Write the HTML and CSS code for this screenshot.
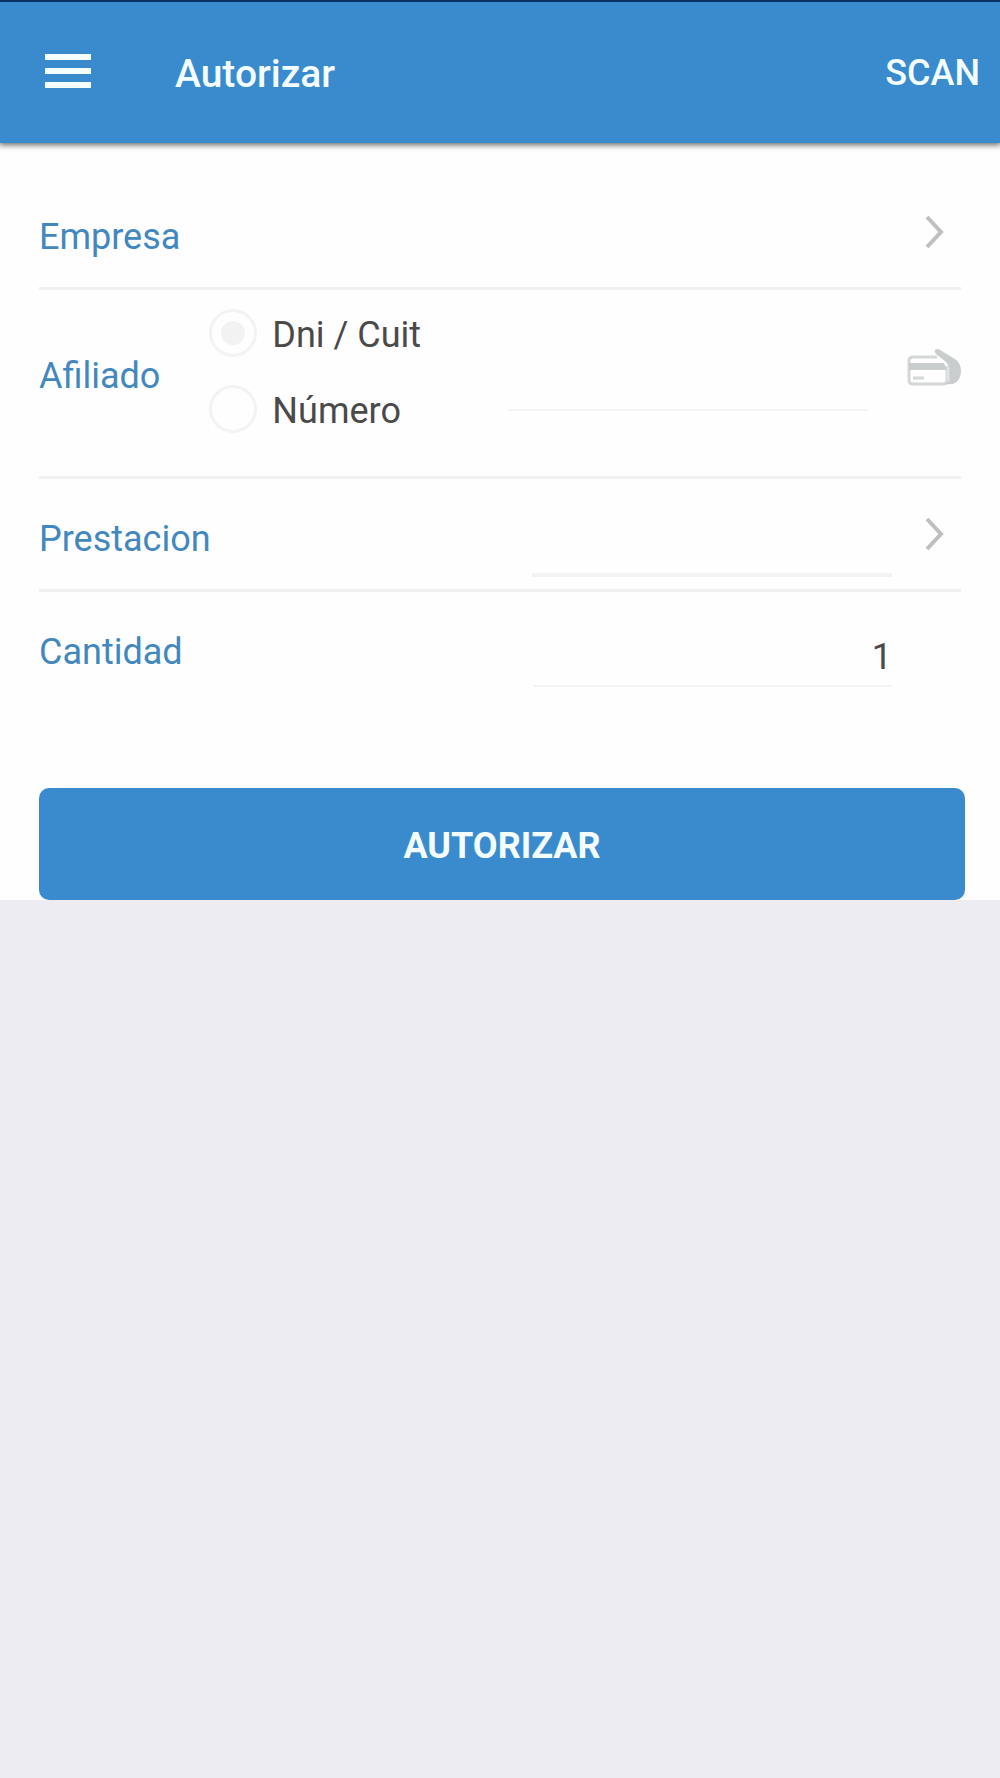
FILE: index.html
```html
<!DOCTYPE html>
<html lang="es">
<head>
    <meta charset="UTF-8">
    <meta name="viewport" content="width=device-width, initial-scale=1.0">
    <title>Autorizar</title>
    <link rel="stylesheet" href="styles.css">
</head>
<body>
    <header class="toolbar">
        <button type="button" class="menu-button" aria-label="Menu">
            <svg width="46" height="34" viewBox="0 0 46 34" fill="currentColor">
                <rect width="46" height="6"/>
                <rect y="14" width="46" height="6"/>
                <rect y="28" width="46" height="6"/>
            </svg>
        </button>
        <h1>Autorizar</h1>
        <button type="button" class="scan-button">SCAN</button>
    </header>

    <form class="form">
        <div class="row">
            <label class="name" for="empresa">Empresa</label>
            <button type="button" class="side chevron" id="empresa">
                <svg width="20" height="34" viewBox="0 0 20 34" fill="none" stroke="currentColor" stroke-width="4">
                    <path d="M2 2l14 15L2 32"/>
                </svg>
            </button>
        </div>

        <div class="row member">
            <label class="name" for="afiliado">Afiliado</label>
            <div class="radios">
                <label><input type="radio" name="tipo" value="dni" checked><span>Dni / Cuit</span></label>
                <label><input type="radio" name="tipo" value="numero"><span>Número</span></label>
            </div>
            <input class="field" type="text" id="afiliado">
            <button type="button" class="side card" aria-label="Tarjeta">
                <svg width="54" height="38" viewBox="0 0 54 38">
                    <path d="M30 9H6Q2 9 2 13v19q0 4 4 4h30q4 0 4-4V18" fill="none" stroke="#d3d7d7" stroke-width="3"/>
                    <path d="M2 15h35l3 7H2z" fill="#c9cdcd"/>
                    <path d="M6 30h11" stroke="#d3d7d7" stroke-width="3"/>
                    <path d="M28 2q2-2 5 0l15 9q6 4 6 12 0 8-6 12-3 2-10 1l4-3V20q0-3-3-6L29 6q-2-2-1-4z" fill="#c9cdcd"/>
                    <path d="M41 19v14" stroke="#e0e3e3" stroke-width="3"/>
                </svg>
            </button>
        </div>

        <div class="row">
            <label class="name" for="prestacion">Prestacion</label>
            <input class="field thick" type="text" id="prestacion">
            <button type="button" class="side chevron" aria-label="Buscar">
                <svg width="20" height="34" viewBox="0 0 20 34" fill="none" stroke="currentColor" stroke-width="4">
                    <path d="M2 2l14 15L2 32"/>
                </svg>
            </button>
        </div>

        <div class="row amount">
            <label class="name" for="cantidad">Cantidad</label>
            <input class="field" type="text" inputmode="numeric" id="cantidad" value="1">
        </div>

        <button type="submit" class="submit">AUTORIZAR</button>
    </form>
</body>
</html>
```
FILE: styles.css
```css
* {
    box-sizing: border-box;
}

body {
    margin: 0;
    background-color: #edecf2;
    color: #4a4a4a;
    font-family: Roboto, sans-serif;
    font-size: 36px;
    line-height: 44px;
}

button, input {
    margin: 0;
    padding: 0;
    border: none;
    background: none;
    color: inherit;
    font: inherit;
}

svg {
    display: block;
}

.toolbar {
    position: relative;
    display: flex;
    align-items: center;
    height: 143px;
    padding: 0 20px 0 45px;
    border-top: 2px solid #0c2f66;
    background-color: #398bce;
    box-shadow: 0 1px 6px 1px rgba(0, 0, 0, 0.6);
    color: #f4fdff;
}

.menu-button {
    padding-bottom: 4px;
}

.toolbar h1 {
    margin: 0 auto 0 84px;
    padding-top: 2px;
    font-size: 39px;
    font-weight: 500;
}

.scan-button {
    font-weight: 500;
}

.form {
    padding: 34px 35px 0 39px;
    background-color: #fefefe;
}

.row {
    display: flex;
    align-items: center;
    height: 113px;
    margin-right: 4px;
    border-bottom: 3px solid #f0f0f0;
}

.name {
    padding-top: 10px;
    color: #4288bf;
}

.field {
    width: 39%;
    height: 56px;
    margin-left: auto;
    border-bottom: 2px solid #f4f4f4;
    text-align: right;
}

.field:focus {
    outline: none;
}

.thick {
    border-bottom-width: 4px;
}

.row > .thick {
    align-self: flex-end;
    margin-bottom: 12px;
}

.side {
    display: flex;
    flex-shrink: 0;
    justify-content: flex-end;
}

.chevron {
    width: 69px;
    padding-right: 16px;
    color: #bfbfbf;
}

.name + .side {
    margin-left: auto;
}

.member {
    height: 189px;
    padding: 5px 0 29px;
}

.radios {
    margin-left: 49px;
}

.radios label {
    display: flex;
    align-items: center;
    gap: 15px;
    height: 76px;
}

.radios span {
    padding-top: 4px;
}

.radios input {
    display: grid;
    place-items: center;
    width: 48px;
    height: 48px;
    border: 3px solid #f3f3f3;
    border-radius: 50%;
    appearance: none;
}

.radios input:checked::before {
    content: "";
    width: 24px;
    height: 24px;
    border-radius: 50%;
    background-color: #f2f2f2;
}

.member .field {
    align-self: flex-end;
    margin-bottom: 36px;
}

.card {
    width: 93px;
    padding-bottom: 8px;
}

.amount {
    padding-right: 69px;
    border-bottom-color: transparent;
}

.amount .field {
    align-self: flex-end;
    width: 42%;
    margin-bottom: 15px;
    padding-bottom: 2px;
}

.submit {
    display: block;
    width: 100%;
    height: 112px;
    margin-top: 83px;
    padding-top: 4px;
    border-radius: 10px;
    background-color: #398bce;
    color: #f4fdff;
    font-weight: 700;
}
```
